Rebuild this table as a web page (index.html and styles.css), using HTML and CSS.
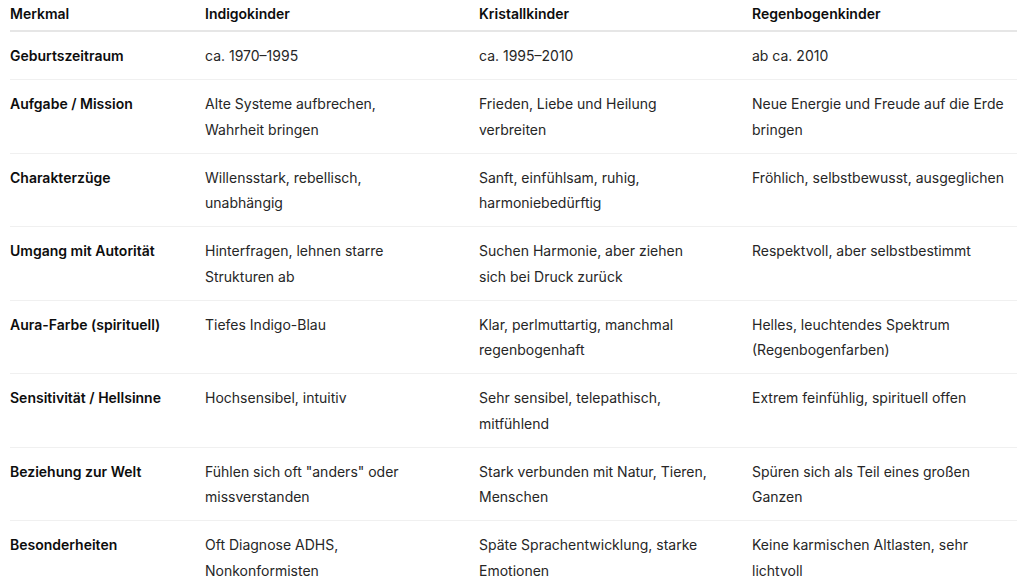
FILE: index.html
```html
<!DOCTYPE html>
<html lang="de">
<head>
<meta charset="utf-8">
<title>Indigo-, Kristall- und Regenbogenkinder</title>
<link rel="stylesheet" href="styles.css">
</head>
<body>
<table class="compare">
  <colgroup>
    <col class="c1"><col class="c2"><col class="c3"><col class="c4">
  </colgroup>
  <thead>
    <tr><th>Merkmal</th><th>Indigokinder</th><th>Kristallkinder</th><th>Regenbogenkinder</th></tr>
  </thead>
  <tbody>
    <tr><td class="key">Geburtszeitraum</td><td>ca. 1970–1995</td><td>ca. 1995–2010</td><td>ab ca. 2010</td></tr>
    <tr><td class="key">Aufgabe / Mission</td><td>Alte Systeme aufbrechen, Wahrheit bringen</td><td>Frieden, Liebe und Heilung verbreiten</td><td>Neue Energie und Freude auf die Erde bringen</td></tr>
    <tr><td class="key">Charakterzüge</td><td>Willensstark, rebellisch, unabhängig</td><td>Sanft, einfühlsam, ruhig, harmoniebedürftig</td><td>Fröhlich, selbstbewusst, ausgeglichen</td></tr>
    <tr><td class="key">Umgang mit Autorität</td><td>Hinterfragen, lehnen starre Strukturen ab</td><td>Suchen Harmonie, aber ziehen sich bei Druck zurück</td><td>Respektvoll, aber selbstbestimmt</td></tr>
    <tr><td class="key">Aura-Farbe (spirituell)</td><td>Tiefes Indigo-Blau</td><td>Klar, perlmuttartig, manchmal regenbogenhaft</td><td>Helles, leuchtendes Spektrum (Regenbogenfarben)</td></tr>
    <tr><td class="key">Sensitivität / Hellsinne</td><td>Hochsensibel, intuitiv</td><td>Sehr sensibel, telepathisch, mitfühlend</td><td>Extrem feinfühlig, spirituell offen</td></tr>
    <tr><td class="key">Beziehung zur Welt</td><td>Fühlen sich oft "anders" oder missverstanden</td><td>Stark verbunden mit Natur, Tieren, Menschen</td><td>Spüren sich als Teil eines großen Ganzen</td></tr>
    <tr><td class="key">Besonderheiten</td><td>Oft Diagnose ADHS, Nonkonformisten</td><td>Späte Sprachentwicklung, starke Emotionen</td><td>Keine karmischen Altlasten, sehr lichtvoll</td></tr>
  </tbody>
</table>
</body>
</html>
```
FILE: styles.css
```css
html, body {
  margin: 0;
  padding: 0;
  background: #ffffff;
}

body {
  font-family: "Inter", "Liberation Sans", Arial, sans-serif;
  font-size: 14px;
  color: #262626;
}

.compare {
  margin-left: 10px;
  width: 1007px;
  table-layout: fixed;
  border-collapse: collapse;
  border-spacing: 0;
}

.c1 { width: 195px; }
.c2 { width: 274px; }
.c3 { width: 273px; }
.c4 { width: 265px; }

.compare th,
.compare td {
  text-align: left;
  vertical-align: top;
  line-height: 25.25px;
  padding: 11px 0 11px 0;
}

.compare th {
  font-weight: 600;
  color: #0d0d0d;
  line-height: 24px;
  padding-top: 2px;
  padding-bottom: 4px;
  border-bottom: 2px solid #e6e6e6;
}

.compare td {
  border-bottom: 1px solid #f0f0f0;
}

.compare tbody tr:last-child td {
  border-bottom: none;
}

.compare th:nth-child(1), .compare td:nth-child(1) { padding-right: 20px; }
.compare th:nth-child(2), .compare td:nth-child(2) { padding-right: 49px; }
.compare th:nth-child(3), .compare td:nth-child(3) { padding-right: 43px; }
.compare th:nth-child(4), .compare td:nth-child(4) { padding-right: 0; }

.compare td.key {
  font-weight: 600;
  color: #0d0d0d;
}
```
